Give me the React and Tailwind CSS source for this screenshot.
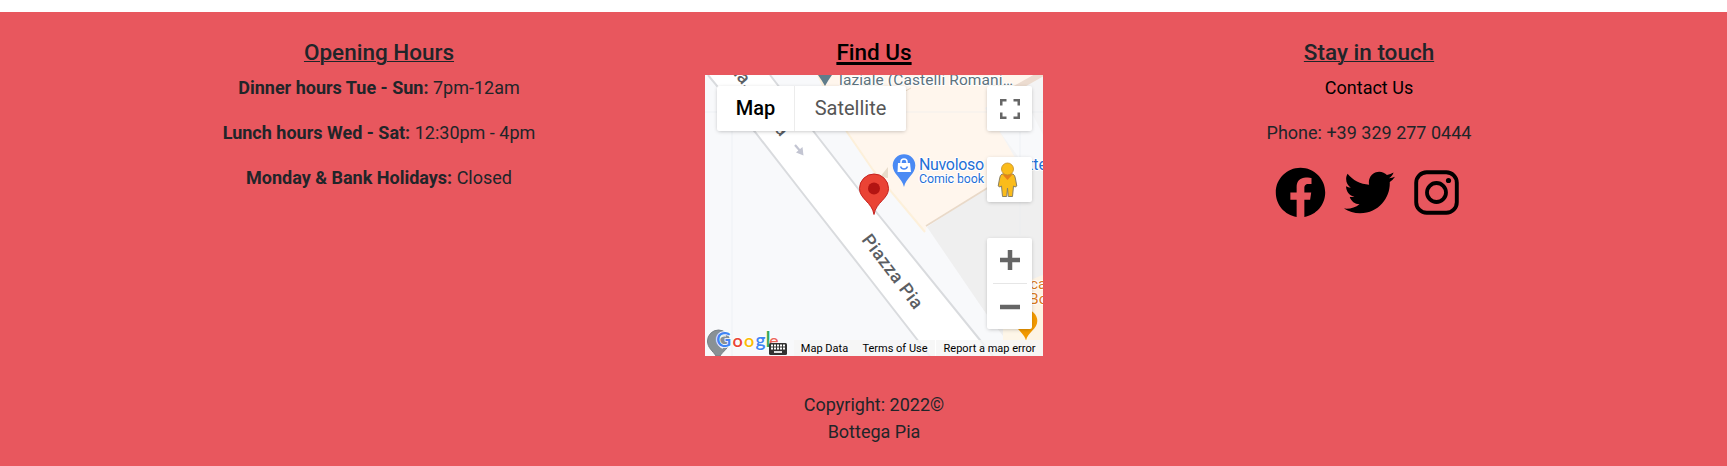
import { FaFacebook, FaTwitter } from "react-icons/fa";

function MapArt() {
  return (
    <svg className="block" width="338" height="281" viewBox="0 0 338 281" fontFamily="Roboto, sans-serif">
      <rect width="338" height="281" fill="#f8f9fb" />
      <path d="M113 0H338V40L295 57L313 80L282 113L222 151L220 157L168 95L142 57Z" fill="#fff6ed" />
      <path d="M113 0L142 57L168 95L220 157" fill="none" stroke="#fdf0da" strokeWidth="2" />
      <path d="M280 33L315 13L338 2V110H326L295 57Z" fill="#f4f4f5" />
      <path d="M327 38L338 60V110H326L312 80L295 57Z" fill="#f8f9fb" />
      <path d="M222 152L260 127L282 113L338 90V281H310L282 240Z" fill="#efefef" />
      <path d="M222 157L282 240L305 270V281H282L200 170Z" fill="#f8f9fb" />
      <path d="M298 254H338V281H305L298 272Z" fill="#fef6e8" />
      <path d="M325 254V205L338 200V281H320Z" fill="#fdf3e4" />
      <path d="M193 20L206 13" stroke="#ead9c6" />
      <path d="M221 151L284 112" stroke="#e9d9c8" strokeWidth="1.6" />
      <path d="M306 16L338 -2" stroke="#ecdcd0" strokeWidth="6" />
      <path d="M183 92V103L175 102Z" fill="#e9dccb" />
      <path d="M0 37H338M27 0V281M315 57V160" stroke="#e7e9ec" strokeWidth=".5" />
      <path d="M3 0L50 57L103 125L165 204L225 281H288L275 265L172 138L109 57L65 0Z" fill="#fff" />
      <path d="M3 0L50 57L103 125L165 204L225 281M65 0L109 57L172 138L275 265L288 281" fill="none" stroke="#d9dbde" strokeWidth="2" />
      <path d="M90 70L96.500 77.500" stroke="#c3c5d2" strokeWidth="2.200" />
      <path d="M98.500 80.500L91 77.500L97.500 72Z" fill="#c3c5d2" />

      <g fill="#5b5e63" fontSize="18" fontWeight="500" textAnchor="middle">
        <text transform="translate(187.500 196.500) rotate(52.800)" y="6" textLength="88">Piazza Pia</text>
        <text transform="translate(38 3.500) rotate(50)" y="5">ia.</text>
        <text transform="translate(77 54.500) rotate(50)" y="6">a</text>
      </g>

      <g stroke="#fff" strokeWidth="2" paintOrder="stroke" strokeLinejoin="round">
        <text x="134" y="9.500" fontSize="15.500" fill="#5d727d" textLength="174">laziale (Castelli Romani…</text>
        <text x="214" y="95.300" fontSize="16" fill="#1f6fd6" textLength="65">Nuvoloso</text>
        <text x="323" y="95.300" fontSize="16" fill="#1f6fd6">tte</text>
        <text x="214" y="107.700" fontSize="12.500" fill="#1f6fd6" textLength="65">Comic book</text>
        <text x="325" y="214" fontSize="15.500" fill="#d97a1c">ca</text>
        <text x="324" y="229" fontSize="15.500" fill="#d97a1c">Bo</text>
      </g>
      <path d="M113 0H127Q124 4 120 11Q116 4 113 0Z" fill="#607d8b" />
      <path d="M199 112C197 103 187.700 99 187.700 90.500A11.300 11.300 0 0 1 210.300 90.500C210.300 99 201 103 199 112Z" fill="#4a8af4" />
      <path d="M193 88H205L206 97H192.500Z" fill="#fff" />
      <path d="M196 88V87A3 3 0 0 1 202 87V88" fill="none" stroke="#fff" strokeWidth="1.500" />
      <path d="M195.500 91.500A3.700 3.700 0 0 0 202.500 91.500" fill="none" stroke="#4a8af4" strokeWidth="1.500" />
      <path d="M321 265.500C319 257 309.700 254 309.700 246A11.300 11.300 0 0 1 332.300 246C332.300 254 323 257 321 265.500Z" fill="#f29900" />
      <path d="M169 139.500C167 127 154.500 124 154.500 113.500A14.500 14.500 0 0 1 183.500 113.500C183.500 124 171 127 169 139.500Z" fill="#ea4335" stroke="#c5221f" />
      <circle cx="169" cy="113.500" r="6" fill="#b31412" />

      <path d="M15 281H11C8 276 2.500 273 2.500 266A11 11 0 0 1 24.500 266C24.500 273 18 276 15 281Z" fill="#899195" stroke="#778086" />
      <path d="M21 261A6 6 0 1 0 18 273" fill="none" stroke="#eef0f1" strokeWidth="1.500" />
      <g fontFamily="Lato, sans-serif" fontSize="21" stroke="#fff" strokeWidth="1.500" paintOrder="stroke" fontWeight="600">
        <text x="11" y="272" fill="#4285f4">G</text>
        <text x="27.500" y="272" fontSize="18" fill="#ea4335">o</text>
        <text x="39" y="272" fontSize="18" fill="#fbbc05">o</text>
        <text x="50.500" y="272" fontSize="19" fill="#4285f4">g</text>
        <text x="60.500" y="272" fill="#34a853">l</text>
        <text x="64" y="272" fontSize="18" fill="#ea4335" opacity=".8">e</text>
      </g>
    </svg>
  );
}

function Keyboard() {
  return (
    <svg width="18" height="12" viewBox="0 0 18 12" className="block">
      <rect width="18" height="12" rx="1.500" fill="#333" />
      <path d="M2 2.500H16M2 5.500H16" stroke="#fff" strokeWidth="2" strokeDasharray="2 1" />
      <path d="M5 9H13" stroke="#fff" strokeWidth="1.700" />
    </svg>
  );
}

function Pegman() {
  return (
    <svg width="21" height="36" viewBox="0 0 21 36" className="-translate-x-0.5">
      <path d="M5 12H16Q18 13 18.500 17L19.800 24Q18 26 16.500 24L15.500 34.500H11.300L10.500 26L9.700 34.500H5.500L4.500 24Q3 26 1.200 24L2.500 17Q3 13 5 12Z" fill="#fbbc1b" stroke="#8a8063" />
      <path d="M5.500 12.500H15.500L10.500 18Z" fill="#e8811a" />
      <circle cx="10.500" cy="7" r="6" fill="#fbbc1b" stroke="#c18b24" strokeWidth=".8" />
    </svg>
  );
}

function Instagram() {
  return (
    <svg width="45" height="51" viewBox="0 0 45 51" fill="none" stroke="currentColor">
      <rect x="2.200" y="5.200" width="40.600" height="40.600" rx="10.500" strokeWidth="3.900" />
      <circle cx="22.500" cy="25.500" r="9.500" strokeWidth="3.800" />
      <circle cx="34.500" cy="13.500" r="2.600" fill="currentColor" stroke="none" />
    </svg>
  );
}

const control = "absolute left-[282px] flex w-[45px] items-center justify-center rounded-[2px] bg-white shadow-[0_1px_4px_-1px_rgba(0,0,0,0.3)]";

function MapWidget() {
  return (
    <div className="relative mt-px h-[281px] w-[338px] overflow-hidden">
      <MapArt />
      <div className="absolute left-3 top-[11px] flex h-[45px] rounded-[2px] bg-white text-xl leading-[45px] shadow-[0_1px_4px_-1px_rgba(0,0,0,0.3)]">
        <button className="w-[77px] font-medium text-black">Map</button>
        <button className="w-28 border-l border-[#ececec] text-[#565656]">Satellite</button>
      </div>
      <button className={`${control} top-[11px] h-[45px]`}>
        <svg width="20" height="20" viewBox="0 0 20 20" fill="none" stroke="#666" strokeWidth="2.500">
          <path d="M1.250 6.500V1.250H6.500M13.500 1.250H18.750V6.500M18.750 13.500V18.750H13.500M6.500 18.750H1.250V13.500" />
        </svg>
      </button>
      <button className={`${control} top-[82px] h-[45px]`}><Pegman /></button>
      <div className={`${control} top-[163px] h-[91px] flex-col`}>
        <button className="flex h-[45px] w-full items-center justify-center">
          <svg width="20" height="20" viewBox="0 0 20 20" className="-translate-y-px"><path d="M0 10H20M10 0V20" stroke="#666" strokeWidth="4.500" /></svg>
        </button>
        <span className="h-px w-[34px] bg-[#e6e6e6]" />
        <button className="flex h-[45px] w-full items-center justify-center">
          <svg width="20" height="20" viewBox="0 0 20 20"><path d="M0 10H20" stroke="#666" strokeWidth="4.500" /></svg>
        </button>
      </div>
      <div className="absolute bottom-0 right-0 flex h-4 items-end text-[11px] leading-[15px] text-black">
        <span className="mr-[7px] pb-px"><Keyboard /></span>
        <span className="w-[61px] bg-[#f5f5f5]/80 pt-px text-center">Map Data</span>
        <span className="w-[80px] bg-[#f5f5f5]/80 pt-px text-center">Terms of Use</span>
        <span className="ml-px w-[107px] bg-[#f5f5f5]/80 pt-px text-center">Report a map error</span>
      </div>
    </div>
  );
}

const heading = "mb-2 text-[22.5px] font-medium leading-[27px] underline";

export default function App() {
  return (
    <div className="h-[466px] bg-white pt-3 font-['Roboto',sans-serif] text-lg leading-[27px] text-[#212529]">
      <footer className="h-[454px] bg-[#e8575e] pt-[27px]">
        <div className="ml-[131.5px] grid w-[1485px] grid-cols-3 text-center">
          <section>
            <h2 className={`${heading} decoration-1`}>Opening Hours</h2>
            <p className="mb-[18px]"><b>Dinner hours Tue - Sun:</b> 7pm-12am</p>
            <p className="mb-[18px]"><b>Lunch hours Wed - Sat:</b> 12:30pm - 4pm</p>
            <p><b>Monday &amp; Bank Holidays:</b> Closed</p>
          </section>
          <section className="flex flex-col items-center">
            <h2 className={`${heading} text-black decoration-[3px]`}>Find Us</h2>
            <MapWidget />
            <p className="mt-[35px]">Copyright: 2022©<br />Bottega Pia</p>
          </section>
          <section>
            <h2 className={`${heading} decoration-1`}>Stay in touch</h2>
            <p className="mb-[18px]"><a className="text-black">Contact Us</a></p>
            <p className="mb-[21px]">Phone: +39 329 277 0444</p>
            <div className="flex justify-center gap-[18.5px] pr-[5px] text-black">
              <FaFacebook size={51} />
              <FaTwitter size={51} />
              <Instagram />
            </div>
          </section>
        </div>
      </footer>
    </div>
  );
}
